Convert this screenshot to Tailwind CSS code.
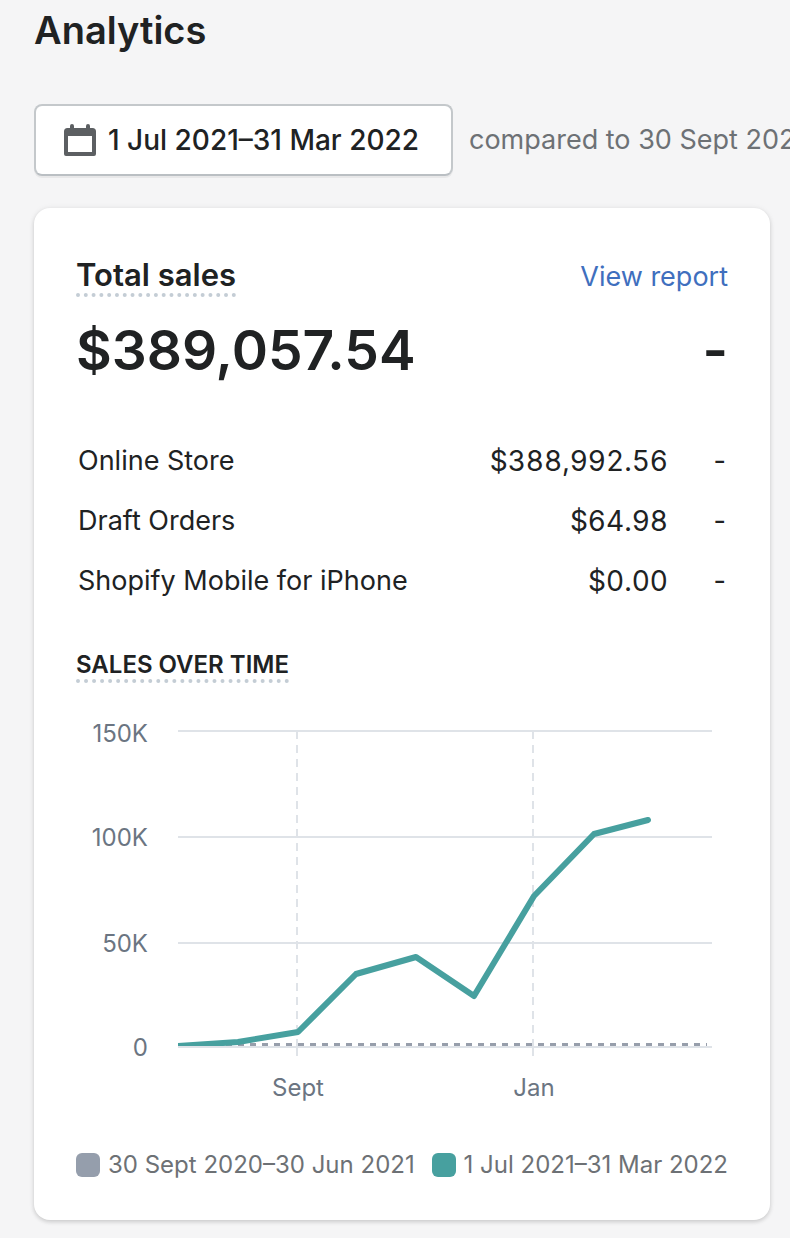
<!DOCTYPE html>
<html lang="en">
<head>
    <meta charset="UTF-8">
    <meta name="viewport" content="width=device-width, initial-scale=1.0">
    <title>Analytics</title>
    <script src="https://cdn.jsdelivr.net/npm/@tailwindcss/browser@4"></script>
</head>
<body class="bg-[#f5f5f6] text-[#202223] font-['Inter',sans-serif] overflow-x-hidden">

    <main class="pl-[34px] pr-5 pt-1 pb-4">
        <h1 class="text-[38px] leading-[52px] font-semibold">Analytics</h1>

        <!-- Date range -->
        <div class="mt-12 flex items-center gap-4 whitespace-nowrap">
            <button type="button" class="h-[72px] shrink-0 flex items-center gap-3 pl-7 pr-8 bg-white border-2 border-[#c4c8cb] border-b-[#babfc3] rounded-lg shadow-[0_2px_0_rgba(0,0,0,0.05)] text-[28px] leading-10 font-medium">
                <svg class="w-8 h-8 shrink-0" viewBox="0 0 32 32" fill="#5c5f62" aria-hidden="true">
                    <path fill-rule="evenodd" d="M6 2a2 2 0 0 1 4 0v2h12V2a2 2 0 0 1 4 0v2h2.500A3.500 3.500 0 0 1 32 7.500V30a2 2 0 0 1-2 2H2a2 2 0 0 1-2-2V7.500A3.500 3.500 0 0 1 3.500 4H6zM4 12v16h24V12z"/>
                </svg>
                1 Jul 2021–31 Mar 2022
            </button>
            <span class="text-[27px] leading-10 text-[#6d7175]">compared to 30 Sept 2020–30 Jun 2021</span>
        </div>

        <!-- Total sales card -->
        <section class="mt-8 px-[42px] pt-12 pb-[39px] bg-white rounded-2xl shadow-[0_2px_4px_rgba(0,0,0,0.15),0_0_6px_rgba(0,0,0,0.06)]">
            <div class="flex items-start justify-between">
                <h2 class="text-[31px] leading-[37px] font-semibold border-b-4 border-dotted border-[#c4cdd5]">Total sales</h2>
                <a href="#" class="text-[27px] leading-[42px] text-[#3f6fbe]">View report</a>
            </div>

            <div class="mt-[11px] flex items-center justify-between text-[55px] leading-[82px] font-semibold">
                <p>$389,057.54</p>
                <p>-</p>
            </div>

            <table class="mt-10 w-full text-[27px] leading-[60px]">
                <tbody>
                    <tr>
                        <th scope="row" class="pl-0.5 text-left font-normal">Online Store</th>
                        <td class="text-right text-[28px] tabular-nums">$388,992.56</td>
                        <td class="w-[60px] pr-0.5 text-right">-</td>
                    </tr>
                    <tr>
                        <th scope="row" class="pl-0.5 text-left font-normal">Draft Orders</th>
                        <td class="text-right text-[28px] tabular-nums">$64.98</td>
                        <td class="w-[60px] pr-0.5 text-right">-</td>
                    </tr>
                    <tr>
                        <th scope="row" class="pl-0.5 text-left font-normal">Shopify Mobile for iPhone</th>
                        <td class="text-right text-[28px] tabular-nums">$0.00</td>
                        <td class="w-[60px] pr-0.5 text-right">-</td>
                    </tr>
                </tbody>
            </table>

            <h3 class="mt-10 w-fit text-[24px] leading-7 font-semibold uppercase border-b-4 border-dotted border-[#c4cdd5]">Sales over time</h3>

            <!-- Line chart -->
            <svg class="mt-8 w-full" viewBox="0 0 652 402" role="img" aria-label="Sales over time">
                <g stroke="#dfe3e8" stroke-width="2">
                    <path d="M102 16h534M102 122h534M102 228h534M102 332h534"/>
                    <path d="M221 16v316M457 16v316" stroke-dasharray="8 6"/>
                    <path d="M221 332v9M457 332v9"/>
                </g>
                <g fill="#6b7582" font-size="24">
                    <g text-anchor="end">
                        <text x="72" y="27">150K</text>
                        <text x="72" y="131">100K</text>
                        <text x="72" y="237">50K</text>
                        <text x="72" y="341">0</text>
                    </g>
                    <g text-anchor="middle">
                        <text x="222" y="381">Sept</text>
                        <text x="458" y="381">Jan</text>
                    </g>
                </g>
                <path d="M102 329.500H631" stroke="#979eab" stroke-width="3" stroke-dasharray="6 6"/>
                <svg x="102" y="0" width="550" height="331" viewBox="102 0 550 331">
                    <path d="M102 331L162 327L222 317L280 259L340 242L398 281L458 181L518 119L572 105" fill="none" stroke="#47a09f" stroke-width="6" stroke-linecap="round" stroke-linejoin="round"/>
                </svg>
            </svg>

            <!-- Legend -->
            <ul class="mt-8 flex justify-between whitespace-nowrap text-[24px] leading-8 text-[#6d7175]">
                <li class="flex items-center gap-2"><span class="w-6 h-6 rounded-md bg-[#959eac]"></span>30 Sept 2020–30 Jun 2021</li>
                <li class="flex items-center gap-2"><span class="w-6 h-6 rounded-md bg-[#47a09f]"></span>1 Jul 2021–31 Mar 2022</li>
            </ul>
        </section>
    </main>

</body>
</html>
